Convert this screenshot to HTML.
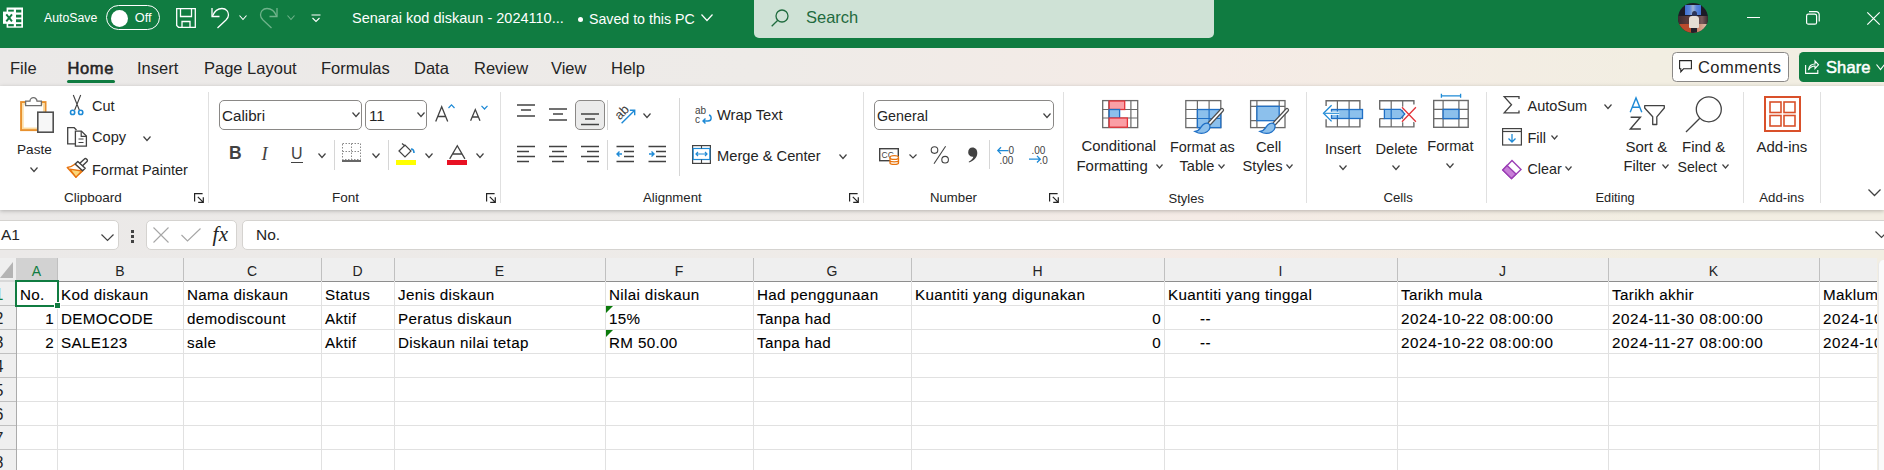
<!DOCTYPE html>
<html><head><meta charset="utf-8">
<style>
*{box-sizing:border-box;margin:0;padding:0}
html,body{width:1884px;height:470px;overflow:hidden;background:#f3f0ed;font-family:"Liberation Sans",sans-serif;color:#242424}
.a{position:absolute;white-space:pre;line-height:1}
svg{position:absolute;overflow:visible}
.c{position:absolute;font-size:15.2px;letter-spacing:0.35px;line-height:22px;color:#000;white-space:pre;-webkit-text-stroke:0.1px #000}
.d{letter-spacing:0.6px}
.hl{position:absolute;top:3.5px;font-size:14px;line-height:18px;text-align:center}
.rn{position:absolute;left:-10.5px;width:14px;font-size:16px;line-height:24px;text-align:right}
</style></head><body>

<div style="position:absolute;left:0px;top:0px;width:1884px;height:470px;background:linear-gradient(90deg,#ebe9e8 0%,#eeebe8 40%,#f5ebe6 64%,#f2eee2 88%,#f2eee3 100%)"></div>
<div style="position:absolute;left:0px;top:0px;width:1884px;height:48px;background:#107c41"></div>
<svg style="left:0px;top:0px" width="28" height="30" viewBox="0 0 28 30"><rect x="6.6" y="7.5" width="16.4" height="20.2" fill="#fff"/>
<rect x="3" y="11.6" width="11.1" height="12.2" fill="#fff"/>
<g fill="#107c41"><rect x="16" y="9.7" width="5.3" height="2.8"/><rect x="16" y="14.7" width="5.3" height="2.8"/><rect x="16" y="19.3" width="5.3" height="2.9"/><rect x="16" y="24.1" width="5.3" height="2.2"/>
<rect x="8.2" y="9.7" width="5.6" height="1.9"/><rect x="8.2" y="24.1" width="5.6" height="2.2"/></g>
<path d="M6.3 14.3L12 21.4M12 14.3L6.3 21.4" stroke="#107c41" stroke-width="1.9"/></svg>
<div class="a" style="left:44.0px;top:12.3px;font-size:12.3px;color:#fff;">AutoSave</div>
<div style="position:absolute;left:106px;top:5px;width:54px;height:25px;border:1.2px solid #fff;border-radius:13px"></div>
<div style="position:absolute;left:110.5px;top:9.5px;width:17px;height:17px;background:#fff;border-radius:50%"></div>
<div class="a" style="left:134.8px;top:12.1px;font-size:12.8px;color:#fff;">Off</div>
<svg style="left:176px;top:8px" width="20" height="20" viewBox="0 0 20 20"><path d="M0.7 0.7H19.3V19.3H2.5L0.7 17.5Z" fill="none" stroke="#fff" stroke-width="1.3"/>
<path d="M4.5 0.7V8.5H15.5V0.7" fill="none" stroke="#fff" stroke-width="1.3"/>
<path d="M6 19.3V13.5H14V19.3" fill="none" stroke="#fff" stroke-width="1.3"/></svg>
<svg style="left:211px;top:8px" width="20" height="20" viewBox="0 0 20 20"><path d="M1 0V8.5H8.5" fill="none" stroke="#fff" stroke-width="1.3"/>
<path d="M1.5 8C3.5 3 6.5 0.5 11 0.5C15.5 0.5 17.5 4 17.5 7C17.5 9 16.5 10.5 15 12L6.5 20" fill="none" stroke="#fff" stroke-width="1.3"/></svg>
<svg style="left:239px;top:15px" width="8" height="5" viewBox="0 0 8 5"><path d="M0.5 0.5L4.0 4.5L7.5 0.5" fill="none" stroke="#fff" stroke-width="1.1"/></svg>
<svg style="left:259px;top:8px" width="20" height="20" viewBox="0 0 20 20"><path d="M18 0V8.5H10.5" fill="none" stroke="#6fb38b" stroke-width="1.3"/>
<path d="M17.5 8C15.5 3 12.5 0.5 8 0.5C3.5 0.5 1.5 4 1.5 7C1.5 9 2.5 10.5 4 12L12.5 20" fill="none" stroke="#6fb38b" stroke-width="1.3"/></svg>
<svg style="left:287px;top:15px" width="8" height="5" viewBox="0 0 8 5"><path d="M0.5 0.5L4.0 4.5L7.5 0.5" fill="none" stroke="#6fb38b" stroke-width="1.1"/></svg>
<svg style="left:311px;top:14px" width="10" height="9" viewBox="0 0 10 9"><path d="M0.5 1H9.5M1.5 4L5 7.5L8.5 4" fill="none" stroke="#fff" stroke-width="1.1"/></svg>
<div class="a" style="left:352.0px;top:11.3px;font-size:14.5px;color:#fff;">Senarai kod diskaun - 2024110...</div>
<div style="position:absolute;left:578px;top:17px;width:5px;height:5px;background:#fff;border-radius:50%"></div>
<div class="a" style="left:589.0px;top:11.6px;font-size:14.2px;color:#fff;">Saved to this PC</div>
<svg style="left:701px;top:14px" width="12" height="7" viewBox="0 0 12 7"><path d="M0.5 0.5L6.0 6.5L11.5 0.5" fill="none" stroke="#fff" stroke-width="1.2"/></svg>
<div style="position:absolute;left:754px;top:-5px;width:460px;height:43px;background:#cfe2d6;border-radius:5px"></div>
<svg style="left:771px;top:9px" width="18" height="18" viewBox="0 0 18 18"><circle cx="11" cy="7" r="6" fill="none" stroke="#1f6b3e" stroke-width="1.3"/><path d="M6.8 11.2L0.7 17.3" stroke="#1f6b3e" stroke-width="1.3"/></svg>
<div class="a" style="left:806.0px;top:9.0px;font-size:16.5px;color:#1f6b3e;">Search</div>
<div style="position:absolute;left:1678px;top:3px;width:30px;height:30px;border-radius:50%;background:#1d1b27;overflow:hidden">
<div style="position:absolute;left:6.7px;top:2.4px;width:16.5px;height:9.6px;background:linear-gradient(90deg,#3f6fd0 0%,#5b86d8 30%,#9fb3d0 50%,#5b86d8 70%,#3f72d6 100%)"></div>
<div style="position:absolute;left:0;top:13px;width:30px;height:9px;background:linear-gradient(90deg,#3a2a30,#5a3a3a 30%,#4a3a40 60%,#7a5a5a 80%,#3a2a30)"></div>
<div style="position:absolute;left:0;top:21px;width:16px;height:10px;background:#b94a2c"></div>
<div style="position:absolute;left:15px;top:21px;width:15px;height:10px;background:linear-gradient(90deg,#c86a4a,#d9c6b6)"></div>
<div style="position:absolute;left:13.5px;top:8px;width:5px;height:6px;background:#2d3558;border-radius:50% 50% 30% 30%"></div>
<div style="position:absolute;left:11px;top:12.5px;width:9.5px;height:12.5px;background:#e6ded4;border-radius:3px 3px 1px 1px"></div>
<div style="position:absolute;left:13px;top:24.5px;width:5.5px;height:6px;background:#22202a"></div>
</div>
<div style="position:absolute;left:1746.5px;top:16.6px;width:13px;height:1.3px;background:#fff"></div>
<svg style="left:1806px;top:11px" width="14" height="14" viewBox="0 0 14 14"><rect x="0.6" y="3.2" width="10" height="10" rx="1.8" fill="none" stroke="#fff" stroke-width="1.2"/><path d="M3 0.6H10.2A3 3 0 0 1 13.2 3.6V10.6" fill="none" stroke="#fff" stroke-width="1.2"/></svg>
<svg style="left:1866.5px;top:11.5px" width="13" height="13" viewBox="0 0 13 13"><path d="M0.3 0.3L12.7 12.7M12.7 0.3L0.3 12.7" stroke="#fff" stroke-width="1.2"/></svg>
<div class="a" style="left:10.0px;top:59.5px;font-size:16.5px;color:#242424;">File</div>
<div class="a" style="left:137.0px;top:59.5px;font-size:16.5px;color:#242424;">Insert</div>
<div class="a" style="left:204.0px;top:59.5px;font-size:16.5px;color:#242424;">Page Layout</div>
<div class="a" style="left:321.0px;top:59.5px;font-size:16.5px;color:#242424;">Formulas</div>
<div class="a" style="left:414.0px;top:59.5px;font-size:16.5px;color:#242424;">Data</div>
<div class="a" style="left:474.0px;top:59.5px;font-size:16.5px;color:#242424;">Review</div>
<div class="a" style="left:551.0px;top:59.5px;font-size:16.5px;color:#242424;">View</div>
<div class="a" style="left:611.0px;top:59.5px;font-size:16.5px;color:#242424;">Help</div>
<div class="a" style="left:67.5px;top:59.5px;font-size:16.5px;color:#242424;-webkit-text-stroke:0.55px #242424;letter-spacing:0.6px">Home</div>
<div style="position:absolute;left:67px;top:80px;width:48px;height:3px;background:#107c41;border-radius:2px"></div>
<div style="position:absolute;left:1672px;top:52px;width:117px;height:30px;background:#fff;border:1px solid #8a8886;border-radius:4.5px"></div>
<svg style="left:1679px;top:60px" width="13" height="13" viewBox="0 0 13 13"><path d="M0.6 0.6H12.4V8.8H4.5L1.8 11.8V8.8H0.6Z" fill="none" stroke="#242424" stroke-width="1.1"/></svg>
<div class="a" style="left:1698.0px;top:59.3px;font-size:16.5px;color:#242424;letter-spacing:0.45px">Comments</div>
<div style="position:absolute;left:1799px;top:52px;width:100px;height:30px;background:#107c41;border-radius:4.5px"></div>
<svg style="left:1805px;top:59px" width="14" height="15" viewBox="0 0 14 15"><path d="M0.6 6V14.4H12.8V11" fill="none" stroke="#fff" stroke-width="1.1"/><path d="M3.5 11C4 7 6.5 5 10 5V2L13.5 5.8L10 9.5V7C7 7 5 8.5 3.5 11Z" fill="none" stroke="#fff" stroke-width="1.1"/></svg>
<div class="a" style="left:1826.0px;top:59.3px;font-size:16.5px;color:#fff;-webkit-text-stroke:0.5px #fff;letter-spacing:0.1px">Share</div>
<svg style="left:1876px;top:64px" width="9" height="6" viewBox="0 0 9 6"><path d="M0.5 0.5L4.5 5.5L8.5 0.5" fill="none" stroke="#fff" stroke-width="1.2"/></svg>
<div style="position:absolute;left:0px;top:86px;width:1884px;height:124px;background:#fff;box-shadow:0 1px 4px rgba(0,0,0,.25)"></div>
<svg style="left:19px;top:96px" width="36" height="38" viewBox="0 0 36 38"><rect x="2.1" y="6.1" width="24.4" height="28" fill="#fff" stroke="#e8912e" stroke-width="2"/>
<rect x="3.9" y="7.9" width="20.8" height="24.4" fill="#fff" stroke="#fcdca0" stroke-width="1.5"/>
<path d="M6.6 9.6V5.2H11A3.5 3.5 0 0 1 18 5.2H22.4V9.6Z" fill="#fff" stroke="#6e6e6e" stroke-width="1.3"/>
<rect x="18.8" y="16.2" width="15.4" height="20" fill="#f7f7f7" stroke="#505050" stroke-width="1.6"/></svg>
<div class="a" style="left:17.0px;top:142.5px;font-size:13.6px;color:#242424;">Paste</div>
<svg style="left:30px;top:167px" width="8" height="5" viewBox="0 0 8 5"><path d="M0.5 0.5L4.0 4.5L7.5 0.5" fill="none" stroke="#424242" stroke-width="1.2"/></svg>
<svg style="left:70px;top:95px" width="14" height="21" viewBox="0 0 14 21"><path d="M3.3 0L9.4 15.3M10.7 0L4.6 15.3" stroke="#424242" stroke-width="1.1"/>
<circle cx="2.6" cy="17.4" r="2.1" fill="#fff" stroke="#1e8ad6" stroke-width="1.6"/><circle cx="10.7" cy="17.4" r="2.1" fill="#fff" stroke="#1e8ad6" stroke-width="1.6"/></svg>
<div class="a" style="left:92.0px;top:98.7px;font-size:14.5px;color:#242424;">Cut</div>
<svg style="left:67px;top:127px" width="21" height="20" viewBox="0 0 21 20"><path d="M8.3 16.9H0.7V0.7H7.2L9.5 3" fill="none" stroke="#424242" stroke-width="1.3"/>
<path d="M8.4 4.1H14.4L19.4 9.1V19.2H8.4Z" fill="#fff" stroke="#424242" stroke-width="1.3"/>
<path d="M14.2 4.1V9.3H19.4" fill="none" stroke="#424242" stroke-width="1.2"/><path d="M11.5 12H16.5M11.5 15.5H16.5" stroke="#424242" stroke-width="1.1"/></svg>
<div class="a" style="left:92.0px;top:130.1px;font-size:14.6px;color:#242424;">Copy</div>
<svg style="left:143px;top:136px" width="8" height="5" viewBox="0 0 8 5"><path d="M0.5 0.5L4.0 4.5L7.5 0.5" fill="none" stroke="#424242" stroke-width="1.2"/></svg>
<svg style="left:66px;top:158px" width="22" height="21" viewBox="0 0 22 21"><path d="M1.3 9.5C4.5 9 7 7.8 9.2 6L16.6 12.8C14.5 15 12 17 9.9 19.1Z" fill="#fff" stroke="#e8740e" stroke-width="1.5" stroke-linejoin="round"/>
<path d="M3.8 11.1L15.9 13L9.9 19.1Z" fill="#fbd77a" stroke="#e8740e" stroke-width="1.3" stroke-linejoin="round"/>
<path d="M13.3 5.8L18.4 0.9A1.4 1.4 0 0 1 20.4 0.9L21 1.5A1.4 1.4 0 0 1 21 3.5L16 8.2Z" fill="#fff" stroke="#424242" stroke-width="1.4"/>
<path d="M9.2 6L11.8 3.4L19.2 10.2L16.6 12.8Z" fill="#fff" stroke="#424242" stroke-width="1.4" stroke-linejoin="round"/></svg>
<div class="a" style="left:92.0px;top:162.7px;font-size:14.5px;color:#242424;">Format Painter</div>
<div class="a" style="left:64.0px;top:190.6px;font-size:13.5px;color:#242424;">Clipboard</div>
<svg style="left:194px;top:193px" width="10" height="10" viewBox="0 0 10 10"><path d="M0.6 8.5V0.6H8.6M3.8 3.8L9.3 9.3M9.3 4.2V9.3H4.2" fill="none" stroke="#242424" stroke-width="1.2"/></svg>
<div style="position:absolute;left:208px;top:92px;width:1px;height:111px;background:#e0e0e0"></div>
<div style="position:absolute;left:219px;top:100px;width:143px;height:30px;border:1px solid #8a8886;border-radius:5px;background:#fff"></div>
<div class="a" style="left:222.0px;top:108.1px;font-size:15.2px;color:#242424;">Calibri</div>
<svg style="left:352px;top:112px" width="8" height="5" viewBox="0 0 8 5"><path d="M0.5 0.5L4.0 4.5L7.5 0.5" fill="none" stroke="#424242" stroke-width="1.2"/></svg>
<div style="position:absolute;left:365px;top:100px;width:62px;height:30px;border:1px solid #8a8886;border-radius:5px;background:#fff"></div>
<div class="a" style="left:369.0px;top:108.1px;font-size:15.2px;color:#242424;">11</div>
<svg style="left:417px;top:112px" width="8" height="5" viewBox="0 0 8 5"><path d="M0.5 0.5L4.0 4.5L7.5 0.5" fill="none" stroke="#424242" stroke-width="1.2"/></svg>
<svg style="left:435px;top:105.5px" width="14" height="16" viewBox="0 0 14 16"><path d="M0.7 15.5L6.7 0.7L12.7 15.5M2.7 10.5H10.7" fill="none" stroke="#424242" stroke-width="1.3"/></svg>
<svg style="left:448px;top:104px" width="7" height="5" viewBox="0 0 7 5"><path d="M0.5 4L3.5 0.8L6.5 4" fill="none" stroke="#1e8ad6" stroke-width="1.2"/></svg>
<svg style="left:469.5px;top:109.3px" width="11" height="12" viewBox="0 0 11 12"><path d="M0.6 11.7L5.3 0.6L10 11.7M2.2 8H8.4" fill="none" stroke="#424242" stroke-width="1.3"/></svg>
<svg style="left:481px;top:105px" width="7" height="5" viewBox="0 0 7 5"><path d="M0.5 0.8L3.5 4L6.5 0.8" fill="none" stroke="#1e8ad6" stroke-width="1.2"/></svg>
<div class="a" style="left:229.0px;top:145.4px;font-size:17.5px;color:#424242;font-weight:bold">B</div>
<div class="a" style="left:261.5px;top:144.5px;font-size:18.5px;color:#424242;font-style:italic;font-family:Liberation Serif">I</div>
<div class="a" style="left:291.0px;top:146.0px;font-size:16px;color:#424242;">U</div>
<div style="position:absolute;left:291px;top:162px;width:12px;height:1.3px;background:#424242"></div>
<svg style="left:318px;top:153px" width="8" height="5" viewBox="0 0 8 5"><path d="M0.5 0.5L4.0 4.5L7.5 0.5" fill="none" stroke="#424242" stroke-width="1.2"/></svg>
<div style="position:absolute;left:334px;top:140px;width:1px;height:30px;background:#d6d6d6"></div>
<svg style="left:342px;top:143px" width="19" height="19" viewBox="0 0 19 19"><rect x="0.5" y="0.5" width="18" height="16" fill="none" stroke="#8a8a8a" stroke-width="1" stroke-dasharray="1.5 1.5"/>
<path d="M9.5 0.5V16.5M0.5 8.5H18.5" stroke="#8a8a8a" stroke-width="1" stroke-dasharray="1.5 1.5"/>
<path d="M0 18H19" stroke="#424242" stroke-width="1.6"/></svg>
<svg style="left:372px;top:153px" width="8" height="5" viewBox="0 0 8 5"><path d="M0.5 0.5L4.0 4.5L7.5 0.5" fill="none" stroke="#424242" stroke-width="1.2"/></svg>
<div style="position:absolute;left:388px;top:140px;width:1px;height:30px;background:#d6d6d6"></div>
<svg style="left:396px;top:143px" width="20" height="22" viewBox="0 0 20 22"><path d="M3 8L9 2L15 8L9 14Z" fill="#fff" stroke="#424242" stroke-width="1.2"/>
<path d="M6 0.5L9 3" stroke="#424242" stroke-width="1.2"/><path d="M15 6C17 6 18 8 18 10" fill="none" stroke="#1e8ad6" stroke-width="1.6"/>
<rect x="0" y="17" width="20" height="5" fill="#ffff00"/></svg>
<svg style="left:425px;top:153px" width="8" height="5" viewBox="0 0 8 5"><path d="M0.5 0.5L4.0 4.5L7.5 0.5" fill="none" stroke="#424242" stroke-width="1.2"/></svg>
<svg style="left:449px;top:145px" width="17" height="14" viewBox="0 0 17 14"><path d="M0.7 13.8L8.3 0.7L15.9 13.8M3.5 9H13.1" fill="none" stroke="#424242" stroke-width="1.3"/></svg>
<div style="position:absolute;left:447px;top:159.5px;width:20px;height:5px;background:#e81123"></div>
<svg style="left:476px;top:153px" width="8" height="5" viewBox="0 0 8 5"><path d="M0.5 0.5L4.0 4.5L7.5 0.5" fill="none" stroke="#424242" stroke-width="1.2"/></svg>
<div class="a" style="left:332.0px;top:190.6px;font-size:13.5px;color:#242424;">Font</div>
<svg style="left:486px;top:193px" width="10" height="10" viewBox="0 0 10 10"><path d="M0.6 8.5V0.6H8.6M3.8 3.8L9.3 9.3M9.3 4.2V9.3H4.2" fill="none" stroke="#242424" stroke-width="1.2"/></svg>
<div style="position:absolute;left:500px;top:92px;width:1px;height:111px;background:#e0e0e0"></div>
<svg style="left:517px;top:95px" width="30" height="80" viewBox="0 0 30 80"><path d="M0 10H18" stroke="#424242" stroke-width="1.5"/><path d="M4 15H14" stroke="#424242" stroke-width="1.5"/><path d="M0 21H18" stroke="#424242" stroke-width="1.5"/></svg>
<svg style="left:549px;top:95px" width="30" height="80" viewBox="0 0 30 80"><path d="M0 14H18" stroke="#424242" stroke-width="1.5"/><path d="M4 19H14" stroke="#424242" stroke-width="1.5"/><path d="M0 25H18" stroke="#424242" stroke-width="1.5"/></svg>
<div style="position:absolute;left:575px;top:100px;width:30px;height:30px;background:#ebebeb;border:1px solid #8a8886;border-radius:5px"></div>
<svg style="left:581px;top:95px" width="30" height="80" viewBox="0 0 30 80"><path d="M0 19H18" stroke="#424242" stroke-width="1.5"/><path d="M4 24H14" stroke="#424242" stroke-width="1.5"/><path d="M0 29.5H18" stroke="#424242" stroke-width="1.5"/></svg>
<div style="position:absolute;left:607px;top:100px;width:1px;height:30px;background:#d6d6d6"></div>
<svg style="left:614px;top:104px" width="22" height="20" viewBox="0 0 22 20"><text x="8" y="12.5" text-anchor="middle" transform="rotate(-45 8 8.5)" font-size="13" fill="#424242" font-family="Liberation Sans">ab</text>
<path d="M7.6 19.3L20.5 6.5M15.8 6.3H20.7V11.2" fill="none" stroke="#1e8ad6" stroke-width="1.4"/></svg>
<svg style="left:643px;top:113px" width="8" height="5" viewBox="0 0 8 5"><path d="M0.5 0.5L4.0 4.5L7.5 0.5" fill="none" stroke="#424242" stroke-width="1.2"/></svg>
<svg style="left:517px;top:95px" width="30" height="80" viewBox="0 0 30 80"><path d="M0 51.5H18" stroke="#424242" stroke-width="1.5"/><path d="M0 56.5H12" stroke="#424242" stroke-width="1.5"/><path d="M0 61.5H18" stroke="#424242" stroke-width="1.5"/><path d="M0 66.5H12" stroke="#424242" stroke-width="1.5"/></svg>
<svg style="left:549px;top:95px" width="30" height="80" viewBox="0 0 30 80"><path d="M0 51.5H18" stroke="#424242" stroke-width="1.5"/><path d="M3 56.5H15" stroke="#424242" stroke-width="1.5"/><path d="M0 61.5H18" stroke="#424242" stroke-width="1.5"/><path d="M3 66.5H15" stroke="#424242" stroke-width="1.5"/></svg>
<svg style="left:581px;top:95px" width="30" height="80" viewBox="0 0 30 80"><path d="M0 51.5H18" stroke="#424242" stroke-width="1.5"/><path d="M6 56.5H18" stroke="#424242" stroke-width="1.5"/><path d="M0 61.5H18" stroke="#424242" stroke-width="1.5"/><path d="M6 66.5H18" stroke="#424242" stroke-width="1.5"/></svg>
<div style="position:absolute;left:607px;top:140px;width:1px;height:30px;background:#d6d6d6"></div>
<svg style="left:616px;top:145px" width="18" height="18" viewBox="0 0 18 18"><path d="M0.5 1.5H18M8 6.5H18M8 11.5H18M0.5 16.5H18" stroke="#424242" stroke-width="1.4"/>
<path d="M6 9H1M3.5 6.5L1 9L3.5 11.5" fill="none" stroke="#1e8ad6" stroke-width="1.4"/></svg>
<svg style="left:648px;top:145px" width="18" height="18" viewBox="0 0 18 18"><path d="M0.5 1.5H18M8 6.5H18M8 11.5H18M0.5 16.5H18" stroke="#424242" stroke-width="1.4"/>
<path d="M1 9H6M3.5 6.5L6 9L3.5 11.5" fill="none" stroke="#1e8ad6" stroke-width="1.4"/></svg>
<div style="position:absolute;left:679px;top:98px;width:1px;height:78px;background:#d6d6d6"></div>
<svg style="left:695px;top:106px" width="18" height="19" viewBox="0 0 18 19"><text x="0" y="8" font-size="10" fill="#424242" font-family="Liberation Sans">ab</text>
<text x="0" y="17" font-size="10" fill="#424242" font-family="Liberation Sans">c</text>
<path d="M14 9C17 10 17 15 13 15H8M10.5 12.5L8 15L10.5 17.5" fill="none" stroke="#1e8ad6" stroke-width="1.4"/></svg>
<div class="a" style="left:717.0px;top:108.2px;font-size:14.7px;color:#242424;">Wrap Text</div>
<svg style="left:692px;top:145px" width="19" height="19" viewBox="0 0 19 19"><rect x="0.6" y="0.6" width="17.8" height="17.8" fill="none" stroke="#424242" stroke-width="1.2"/>
<rect x="1.2" y="3.5" width="16.6" height="11" fill="#fff" stroke="#1e8ad6" stroke-width="1.2"/>
<path d="M9.5 0.6V3.5M9.5 14.5V18.4" stroke="#424242" stroke-width="1.1"/>
<path d="M4 9H15M6 7L4 9L6 11M13 7L15 9L13 11" fill="none" stroke="#1e8ad6" stroke-width="1.2"/></svg>
<div class="a" style="left:717.0px;top:148.6px;font-size:14.7px;color:#242424;">Merge &amp; Center</div>
<svg style="left:839px;top:154px" width="8" height="5" viewBox="0 0 8 5"><path d="M0.5 0.5L4.0 4.5L7.5 0.5" fill="none" stroke="#424242" stroke-width="1.2"/></svg>
<div class="a" style="left:643.0px;top:190.8px;font-size:13.2px;color:#242424;">Alignment</div>
<svg style="left:849px;top:193px" width="10" height="10" viewBox="0 0 10 10"><path d="M0.6 8.5V0.6H8.6M3.8 3.8L9.3 9.3M9.3 4.2V9.3H4.2" fill="none" stroke="#242424" stroke-width="1.2"/></svg>
<div style="position:absolute;left:863px;top:92px;width:1px;height:111px;background:#e0e0e0"></div>
<div style="position:absolute;left:874px;top:100px;width:180px;height:30px;border:1px solid #8a8886;border-radius:5px;background:#fff"></div>
<div class="a" style="left:877.0px;top:108.5px;font-size:14.3px;color:#242424;">General</div>
<svg style="left:1043px;top:113px" width="8" height="5" viewBox="0 0 8 5"><path d="M0.5 0.5L4.0 4.5L7.5 0.5" fill="none" stroke="#424242" stroke-width="1.2"/></svg>
<svg style="left:879px;top:148px" width="21" height="17" viewBox="0 0 21 17"><rect x="0.7" y="0.7" width="18.6" height="12" fill="#fff" stroke="#424242" stroke-width="1.4"/>
<text x="2.5" y="10" font-size="8.5" fill="#424242" font-family="Liberation Sans">CC</text>
<path d="M11 10V15C11 16.8 19.5 16.8 19.5 15V10M11 12.5C11 14.2 19.5 14.2 19.5 12.5" fill="#fff" stroke="#e8740e" stroke-width="1.3"/>
<ellipse cx="15.25" cy="9.5" rx="4.25" ry="1.9" fill="#fff" stroke="#e8740e" stroke-width="1.3"/></svg>
<svg style="left:909px;top:154px" width="8" height="4.5" viewBox="0 0 8 4.5"><path d="M0.5 0.5L4.0 4.0L7.5 0.5" fill="none" stroke="#424242" stroke-width="1.2"/></svg>
<svg style="left:930px;top:146px" width="20" height="18" viewBox="0 0 20 18"><circle cx="4.5" cy="4.1" r="3.3" fill="none" stroke="#424242" stroke-width="1.1"/><circle cx="15.1" cy="13.7" r="3.3" fill="none" stroke="#424242" stroke-width="1.1"/><path d="M15.6 0.3L4 17.7" stroke="#424242" stroke-width="1.1"/></svg>
<svg style="left:967px;top:147px" width="11" height="17" viewBox="0 0 11 17"><path d="M5.4 0.6C8.5 0.6 10.3 3 10.3 6C10.3 10 7.5 13.5 2 15.6L1.7 14.8C4.5 13 6 11.5 6.3 9.8C3.5 9.8 1.2 8 1.2 5.2C1.2 2.5 3 0.6 5.4 0.6Z" fill="#424242"/></svg>
<div style="position:absolute;left:989px;top:140px;width:1px;height:29px;background:#d6d6d6"></div>
<svg style="left:997px;top:145px" width="21" height="19" viewBox="0 0 21 19"><text x="11.5" y="8.5" font-size="10" fill="#424242" font-family="Liberation Sans">0</text>
<text x="2.5" y="18.5" font-size="10" fill="#424242" font-family="Liberation Sans">.00</text>
<path d="M11.5 5.6H0.8M4 2.3L0.8 5.6L4 8.9" fill="none" stroke="#1e8ad6" stroke-width="1.3"/></svg>
<svg style="left:1028px;top:145px" width="21" height="19" viewBox="0 0 21 19"><text x="3.5" y="8.5" font-size="10" fill="#424242" font-family="Liberation Sans">.00</text>
<text x="11.5" y="18.5" font-size="10" fill="#424242" font-family="Liberation Sans">.0</text>
<path d="M1 14.2H12.3M9 10.9L12.3 14.2L9 17.5" fill="none" stroke="#1e8ad6" stroke-width="1.3"/></svg>
<div class="a" style="left:930.0px;top:190.8px;font-size:13.2px;color:#242424;">Number</div>
<svg style="left:1049px;top:193px" width="10" height="10" viewBox="0 0 10 10"><path d="M0.6 8.5V0.6H8.6M3.8 3.8L9.3 9.3M9.3 4.2V9.3H4.2" fill="none" stroke="#242424" stroke-width="1.2"/></svg>
<div style="position:absolute;left:1063px;top:92px;width:1px;height:111px;background:#e0e0e0"></div>
<svg style="left:1102px;top:100px" width="36" height="28" viewBox="0 0 36 28"><rect x="0.7" y="0.6" width="35" height="27" fill="#fff" stroke="#6a6a6a" stroke-width="1.3"/>
<path d="M28.9 0.6V27.6M0.7 9.5H35.7M0.7 18H35.7M6.8 0.6V27.6" stroke="#6a6a6a" stroke-width="1.2"/>
<rect x="7.2" y="1" width="15.5" height="8.5" fill="#fa9fa6" stroke="#e3343a" stroke-width="1.3"/>
<rect x="7.2" y="9.5" width="10.4" height="8.5" fill="#8cc0ec" stroke="#1f6fc5" stroke-width="1.3"/>
<rect x="7.2" y="18" width="18.2" height="9.2" fill="#fa9fa6" stroke="#e3343a" stroke-width="1.3"/></svg>
<div class="a" style="left:1081.5px;top:139.4px;font-size:14.9px;color:#242424;">Conditional</div>
<div class="a" style="left:1076.5px;top:159.1px;font-size:14.9px;color:#242424;">Formatting</div>
<svg style="left:1156px;top:164px" width="7" height="4.5" viewBox="0 0 7 4.5"><path d="M0.5 0.5L3.5 4.0L6.5 0.5" fill="none" stroke="#424242" stroke-width="1.2"/></svg>
<svg style="left:1185px;top:100px" width="40" height="34" viewBox="0 0 40 34"><rect x="0.8" y="0.6" width="35" height="27" fill="#fff" stroke="#6a6a6a" stroke-width="1.3"/>
<path d="M0.8 9.5H35.8M0.8 18.5H35.8M12.4 0.6V27.6M24.1 0.6V27.6" stroke="#6a6a6a" stroke-width="1.2"/>
<rect x="12.4" y="9.5" width="23.4" height="18.1" fill="#8cc0ec" stroke="#1f6fc5" stroke-width="1.3"/>
<path d="M12.4 18.5H35.8M24.1 9.5V27.6" stroke="#1f6fc5" stroke-width="1.2"/>
<path d="M37 10L24.5 23.5" stroke="#505050" stroke-width="4.2" stroke-linecap="round"/><path d="M37 10L24.5 23.5" stroke="#fff" stroke-width="1.8" stroke-linecap="round"/>
<path d="M23.8 23.6C25.8 25.6 25.5 29.5 22 31.8C18.5 34 13.5 33.5 10 31.5C13 31 14.8 29 16.2 26.8C17.8 24.2 21.3 22 23.8 23.6Z" fill="#8cc0ec" stroke="#1f6fc5" stroke-width="1.3"/></svg>
<div class="a" style="left:1170.0px;top:139.8px;font-size:14.4px;color:#242424;">Format as</div>
<div class="a" style="left:1179.5px;top:159.3px;font-size:14.6px;color:#242424;">Table</div>
<svg style="left:1218px;top:164px" width="7" height="4.5" viewBox="0 0 7 4.5"><path d="M0.5 0.5L3.5 4.0L6.5 0.5" fill="none" stroke="#424242" stroke-width="1.2"/></svg>
<svg style="left:1250px;top:100px" width="40" height="34" viewBox="0 0 40 34"><rect x="0.6" y="0.6" width="34.4" height="27" fill="#fff" stroke="#6a6a6a" stroke-width="1.3"/>
<path d="M0.6 6.3H35M6.9 0.6V27.6M0.6 20.7H6.9M29.2 0.6V6.3" stroke="#6a6a6a" stroke-width="1.2"/>
<rect x="6.9" y="6.3" width="22.3" height="14.4" fill="#8cc0ec" stroke="#1f6fc5" stroke-width="1.3"/>
<path d="M37 10L24.5 23.5" stroke="#505050" stroke-width="4.2" stroke-linecap="round"/><path d="M37 10L24.5 23.5" stroke="#fff" stroke-width="1.8" stroke-linecap="round"/>
<path d="M23.8 23.6C25.8 25.6 25.5 29.5 22 31.8C18.5 34 13.5 33.5 10 31.5C13 31 14.8 29 16.2 26.8C17.8 24.2 21.3 22 23.8 23.6Z" fill="#8cc0ec" stroke="#1f6fc5" stroke-width="1.3"/></svg>
<div class="a" style="left:1256.0px;top:139.6px;font-size:14.7px;color:#242424;">Cell</div>
<div class="a" style="left:1242.5px;top:159.3px;font-size:14.7px;color:#242424;">Styles</div>
<svg style="left:1286px;top:164px" width="7" height="4.5" viewBox="0 0 7 4.5"><path d="M0.5 0.5L3.5 4.0L6.5 0.5" fill="none" stroke="#424242" stroke-width="1.2"/></svg>
<div class="a" style="left:1168.5px;top:191.6px;font-size:13px;color:#242424;">Styles</div>
<div style="position:absolute;left:1306px;top:92px;width:1px;height:111px;background:#e0e0e0"></div>
<svg style="left:1322px;top:100px" width="42" height="28" viewBox="0 0 42 28"><path d="M4.1 6V0.7H37.9V26.9H4.1V19.2" fill="#fff" stroke="#6a6a6a" stroke-width="1.4"/>
<path d="M15.4 0.7V26.9M27.1 0.7V26.9" stroke="#6a6a6a" stroke-width="1.2"/>
<rect x="9.5" y="9.5" width="31" height="9" fill="#8cc0ec" stroke="#1f6fc5" stroke-width="1.3"/>
<path d="M27.1 9.5V18.5M15.4 9.5V18.5" stroke="#1f6fc5" stroke-width="1.2"/>
<path d="M17.3 13.3H2.5" stroke="#fff" stroke-width="3.2"/>
<path d="M17.3 13.3H2.5" stroke="#1e8ad6" stroke-width="1.1"/>
<path d="M9.6 5.2L1.5 13.3L9.6 21.4" fill="none" stroke="#1e8ad6" stroke-width="1.3"/></svg>
<div class="a" style="left:1325.0px;top:142.0px;font-size:14.4px;color:#242424;">Insert</div>
<svg style="left:1339px;top:165px" width="8" height="5" viewBox="0 0 8 5"><path d="M0.5 0.5L4.0 4.5L7.5 0.5" fill="none" stroke="#424242" stroke-width="1.2"/></svg>
<svg style="left:1379px;top:100px" width="38" height="28" viewBox="0 0 38 28"><path d="M0.7 9.4V0.7H34.9V4.5M34.9 22V26.9H0.7V18.6" fill="#fff" stroke="#6a6a6a" stroke-width="1.4"/>
<path d="M12.2 0.7V26.9M23.7 0.7V26.9" stroke="#6a6a6a" stroke-width="1.2"/>
<path d="M0.7 9.4H5.4M0.7 18.6H5.4" stroke="#6a6a6a" stroke-width="1.2"/>
<path d="M5.4 9.4H21.5L25.8 14L21.5 18.6H5.4Z" fill="#8cc0ec" stroke="#1f6fc5" stroke-width="1.3"/><path d="M12.2 9.4V18.6" stroke="#1f6fc5" stroke-width="1.2"/>
<path d="M23 7.3L36.9 21.8M36.9 7.3L23 21.8" stroke="#fff" stroke-width="3"/><path d="M23 7.3L36.9 21.8M36.9 7.3L23 21.8" stroke="#e3343a" stroke-width="1.3"/></svg>
<div class="a" style="left:1375.5px;top:141.8px;font-size:14.6px;color:#242424;">Delete</div>
<svg style="left:1392px;top:165px" width="8" height="5" viewBox="0 0 8 5"><path d="M0.5 0.5L4.0 4.5L7.5 0.5" fill="none" stroke="#424242" stroke-width="1.2"/></svg>
<svg style="left:1433px;top:93px" width="36" height="35" viewBox="0 0 36 35"><path d="M8.4 2.8H27.6M8.4 0.8V4.8M27.6 0.8V4.8" stroke="#1e8ad6" stroke-width="1.3"/>
<rect x="0.7" y="7.5" width="34.5" height="26.8" fill="#fff" stroke="#6a6a6a" stroke-width="1.4"/>
<path d="M10.1 7.5V34.3M25.9 7.5V34.3M0.7 16.4H35.2M0.7 25.6H35.2" stroke="#6a6a6a" stroke-width="1.2"/>
<rect x="10.1" y="16.4" width="15.8" height="9.2" fill="#8cc0ec" stroke="#1f6fc5" stroke-width="1.3"/></svg>
<div class="a" style="left:1427.3px;top:139.2px;font-size:14.6px;color:#242424;">Format</div>
<svg style="left:1446px;top:163px" width="8" height="5" viewBox="0 0 8 5"><path d="M0.5 0.5L4.0 4.5L7.5 0.5" fill="none" stroke="#424242" stroke-width="1.2"/></svg>
<div class="a" style="left:1383.5px;top:191.4px;font-size:13.2px;color:#242424;">Cells</div>
<div style="position:absolute;left:1486px;top:92px;width:1px;height:111px;background:#e0e0e0"></div>
<svg style="left:1503px;top:96px" width="17" height="18" viewBox="0 0 17 18"><path d="M16 3V0.7H1.2L8.5 8.8L1.2 16.9H16V14.5" fill="none" stroke="#424242" stroke-width="1.3"/></svg>
<div class="a" style="left:1527.5px;top:99.1px;font-size:14.5px;color:#242424;">AutoSum</div>
<svg style="left:1604px;top:104px" width="8" height="5" viewBox="0 0 8 5"><path d="M0.5 0.5L4.0 4.5L7.5 0.5" fill="none" stroke="#424242" stroke-width="1.2"/></svg>
<svg style="left:1502px;top:128px" width="20" height="18" viewBox="0 0 20 18"><rect x="0.6" y="0.6" width="18.8" height="16.4" fill="#fff" stroke="#424242" stroke-width="1.2"/><path d="M0.6 3.5H19.4" stroke="#424242" stroke-width="1.2"/>
<path d="M10 6V14M6.5 10.5L10 14L13.5 10.5" fill="none" stroke="#1e8ad6" stroke-width="1.3"/></svg>
<div class="a" style="left:1527.5px;top:130.7px;font-size:14.5px;color:#242424;">Fill</div>
<svg style="left:1551px;top:135px" width="7" height="4.5" viewBox="0 0 7 4.5"><path d="M0.5 0.5L3.5 4.0L6.5 0.5" fill="none" stroke="#424242" stroke-width="1.2"/></svg>
<svg style="left:1502px;top:159px" width="20" height="20" viewBox="0 0 20 20"><path d="M0.8 11L10 1.5L19 10.5L9.5 19.5Z" fill="#fff" stroke="#9b3fb5" stroke-width="1.4"/>
<path d="M0.8 11L5 6.5L14 15L9.5 19.5Z" fill="#c87fd8" stroke="#9b3fb5" stroke-width="1.4"/></svg>
<div class="a" style="left:1527.5px;top:162.3px;font-size:14.3px;color:#242424;">Clear</div>
<svg style="left:1565px;top:166px" width="7" height="4.5" viewBox="0 0 7 4.5"><path d="M0.5 0.5L3.5 4.0L6.5 0.5" fill="none" stroke="#424242" stroke-width="1.2"/></svg>
<svg style="left:1628px;top:97px" width="38" height="34" viewBox="0 0 38 34"><path d="M2.2 15.2L8 0.9L13.8 15.2M4.3 10.3H11.7" fill="none" stroke="#1e8ad6" stroke-width="1.4"/>
<path d="M2.6 20.2H12.4L2.3 32H12.9" fill="none" stroke="#424242" stroke-width="1.4"/>
<path d="M16.7 8.7H36.3V11L28.8 19.8V27.5H24.7V19.8L16.7 11Z" fill="#fff" stroke="#424242" stroke-width="1.3" stroke-linejoin="round"/></svg>
<div class="a" style="left:1625.5px;top:138.9px;font-size:15px;color:#242424;">Sort &amp;</div>
<div class="a" style="left:1623.5px;top:159.2px;font-size:14.6px;color:#242424;">Filter</div>
<svg style="left:1662px;top:164px" width="7" height="4.5" viewBox="0 0 7 4.5"><path d="M0.5 0.5L3.5 4.0L6.5 0.5" fill="none" stroke="#424242" stroke-width="1.2"/></svg>
<svg style="left:1685px;top:95px" width="38" height="38" viewBox="0 0 38 38"><circle cx="23.8" cy="14.3" r="12.5" fill="#fff" stroke="#424242" stroke-width="1.3"/><path d="M14.8 23.3L1 37" stroke="#424242" stroke-width="1.3"/></svg>
<div class="a" style="left:1682.0px;top:138.9px;font-size:15px;color:#242424;">Find &amp;</div>
<div class="a" style="left:1677.5px;top:159.6px;font-size:14.2px;color:#242424;">Select</div>
<svg style="left:1722px;top:164px" width="7" height="4.5" viewBox="0 0 7 4.5"><path d="M0.5 0.5L3.5 4.0L6.5 0.5" fill="none" stroke="#424242" stroke-width="1.2"/></svg>
<div class="a" style="left:1595.5px;top:191.8px;font-size:12.8px;color:#242424;">Editing</div>
<div style="position:absolute;left:1743px;top:92px;width:1px;height:111px;background:#e0e0e0"></div>
<svg style="left:1764px;top:96px" width="37" height="36" viewBox="0 0 37 36"><rect x="1" y="1" width="35" height="34" fill="#fff" stroke="#d9502a" stroke-width="2"/>
<rect x="6" y="6" width="11" height="10.5" fill="none" stroke="#d9502a" stroke-width="1.6"/><rect x="20" y="6" width="11" height="10.5" fill="none" stroke="#d9502a" stroke-width="1.6"/>
<rect x="6" y="19.5" width="11" height="10.5" fill="none" stroke="#d9502a" stroke-width="1.6"/><rect x="20" y="19.5" width="11" height="10.5" fill="none" stroke="#d9502a" stroke-width="1.6"/></svg>
<div class="a" style="left:1756.5px;top:138.7px;font-size:15px;color:#242424;">Add-ins</div>
<div class="a" style="left:1759.3px;top:191.4px;font-size:13.2px;color:#242424;">Add-ins</div>
<div style="position:absolute;left:1820px;top:92px;width:1px;height:111px;background:#e0e0e0"></div>
<svg style="left:1868px;top:189px" width="13" height="7" viewBox="0 0 13 7"><path d="M0.5 0.5L6.5 6.5L12.5 0.5" fill="none" stroke="#424242" stroke-width="1.3"/></svg>
<div style="position:absolute;left:-6px;top:220px;width:125px;height:30px;background:#fff;border-radius:5px;border:1px solid #d5d3d0"></div>
<div class="a" style="left:1.0px;top:227.4px;font-size:15.5px;color:#242424;">A1</div>
<svg style="left:101px;top:234px" width="13" height="7" viewBox="0 0 13 7"><path d="M0.5 0.5L6.5 6.5L12.5 0.5" fill="none" stroke="#424242" stroke-width="1.2"/></svg>
<div style="position:absolute;left:131.3px;top:229.5px;width:3px;height:3px;background:#424242"></div>
<div style="position:absolute;left:131.3px;top:234.5px;width:3px;height:3px;background:#424242"></div>
<div style="position:absolute;left:131.3px;top:239.5px;width:3px;height:3px;background:#424242"></div>
<div style="position:absolute;left:145.5px;top:220px;width:91px;height:30px;background:#fff;border-radius:5px;border:1px solid #d5d3d0"></div>
<svg style="left:153px;top:227px" width="16" height="16" viewBox="0 0 16 16"><path d="M0.5 0.5L15.5 15.5M15.5 0.5L0.5 15.5" stroke="#a6a6a6" stroke-width="1.1"/></svg>
<svg style="left:181px;top:228px" width="20" height="14" viewBox="0 0 20 14"><path d="M0.5 7L6.5 13L19.5 0.5" fill="none" stroke="#a6a6a6" stroke-width="1.1"/></svg>
<div class="a" style="left:212.5px;top:224.2px;font-size:21px;color:#242424;font-family:'Liberation Serif';font-style:italic;letter-spacing:0.5px">fx</div>
<div style="position:absolute;left:242px;top:220px;width:1660px;height:30px;background:#fff;border-radius:5px;border:1px solid #d5d3d0"></div>
<div class="a" style="left:256.0px;top:227.4px;font-size:15.5px;color:#242424;">No.</div>
<svg style="left:1875px;top:231px" width="13" height="7" viewBox="0 0 13 7"><path d="M0.5 0.5L6.5 6.5L12.5 0.5" fill="none" stroke="#424242" stroke-width="1.2"/></svg>
<div style="position:absolute;left:0;top:258px;width:1877px;height:212px;background:#fff;overflow:hidden">
<div style="position:absolute;left:0;top:0;width:1877px;height:23px;background:#efefef"></div>
<div style="position:absolute;left:0;top:0;width:16px;height:212px;background:#efefef"></div>
<div style="position:absolute;left:16px;top:0;width:41px;height:23px;background:#d2d2d2"></div>
<svg style="left:0;top:4px" width="13" height="16" viewBox="0 0 13 16"><path d="M13 0V16H0Z" fill="#b4b4b4"/></svg>
<div style="position:absolute;left:16px;top:23px;width:1861px;height:1px;background:#8e8e8e"></div>
<div style="position:absolute;left:0;top:22px;width:16px;height:1.5px;background:#d8d8d8"></div>
<div style="position:absolute;left:16px;top:47px;width:1861px;height:1px;background:#e1e1e1"></div>
<div style="position:absolute;left:0;top:47px;width:16px;height:1px;background:#c0c0c0"></div>
<div style="position:absolute;left:16px;top:71px;width:1861px;height:1px;background:#e1e1e1"></div>
<div style="position:absolute;left:0;top:71px;width:16px;height:1px;background:#c0c0c0"></div>
<div style="position:absolute;left:16px;top:95px;width:1861px;height:1px;background:#e1e1e1"></div>
<div style="position:absolute;left:0;top:95px;width:16px;height:1px;background:#c0c0c0"></div>
<div style="position:absolute;left:16px;top:119px;width:1861px;height:1px;background:#e1e1e1"></div>
<div style="position:absolute;left:0;top:119px;width:16px;height:1px;background:#c0c0c0"></div>
<div style="position:absolute;left:16px;top:143px;width:1861px;height:1px;background:#e1e1e1"></div>
<div style="position:absolute;left:0;top:143px;width:16px;height:1px;background:#c0c0c0"></div>
<div style="position:absolute;left:16px;top:167px;width:1861px;height:1px;background:#e1e1e1"></div>
<div style="position:absolute;left:0;top:167px;width:16px;height:1px;background:#c0c0c0"></div>
<div style="position:absolute;left:16px;top:191px;width:1861px;height:1px;background:#e1e1e1"></div>
<div style="position:absolute;left:0;top:191px;width:16px;height:1px;background:#c0c0c0"></div>
<div style="position:absolute;left:15.5px;top:23px;width:1px;height:212px;background:#ababab"></div>
<div style="position:absolute;left:57px;top:23px;width:1px;height:190px;background:#e1e1e1"></div>
<div style="position:absolute;left:57px;top:0;width:1px;height:23px;background:#c0c0c0"></div>
<div style="position:absolute;left:183px;top:23px;width:1px;height:190px;background:#e1e1e1"></div>
<div style="position:absolute;left:183px;top:0;width:1px;height:23px;background:#c0c0c0"></div>
<div style="position:absolute;left:321px;top:23px;width:1px;height:190px;background:#e1e1e1"></div>
<div style="position:absolute;left:321px;top:0;width:1px;height:23px;background:#c0c0c0"></div>
<div style="position:absolute;left:394px;top:23px;width:1px;height:190px;background:#e1e1e1"></div>
<div style="position:absolute;left:394px;top:0;width:1px;height:23px;background:#c0c0c0"></div>
<div style="position:absolute;left:605px;top:23px;width:1px;height:190px;background:#e1e1e1"></div>
<div style="position:absolute;left:605px;top:0;width:1px;height:23px;background:#c0c0c0"></div>
<div style="position:absolute;left:753px;top:23px;width:1px;height:190px;background:#e1e1e1"></div>
<div style="position:absolute;left:753px;top:0;width:1px;height:23px;background:#c0c0c0"></div>
<div style="position:absolute;left:911px;top:23px;width:1px;height:190px;background:#e1e1e1"></div>
<div style="position:absolute;left:911px;top:0;width:1px;height:23px;background:#c0c0c0"></div>
<div style="position:absolute;left:1164px;top:23px;width:1px;height:190px;background:#e1e1e1"></div>
<div style="position:absolute;left:1164px;top:0;width:1px;height:23px;background:#c0c0c0"></div>
<div style="position:absolute;left:1397px;top:23px;width:1px;height:190px;background:#e1e1e1"></div>
<div style="position:absolute;left:1397px;top:0;width:1px;height:23px;background:#c0c0c0"></div>
<div style="position:absolute;left:1608px;top:23px;width:1px;height:190px;background:#e1e1e1"></div>
<div style="position:absolute;left:1608px;top:0;width:1px;height:23px;background:#c0c0c0"></div>
<div style="position:absolute;left:1819px;top:23px;width:1px;height:190px;background:#e1e1e1"></div>
<div style="position:absolute;left:1819px;top:0;width:1px;height:23px;background:#c0c0c0"></div>
<div class="hl" style="left:16px;width:41px;color:#107c41">A</div>
<div class="hl" style="left:57px;width:126px;color:#242424">B</div>
<div class="hl" style="left:183px;width:138px;color:#242424">C</div>
<div class="hl" style="left:321px;width:73px;color:#242424">D</div>
<div class="hl" style="left:394px;width:211px;color:#242424">E</div>
<div class="hl" style="left:605px;width:148px;color:#242424">F</div>
<div class="hl" style="left:753px;width:158px;color:#242424">G</div>
<div class="hl" style="left:911px;width:253px;color:#242424">H</div>
<div class="hl" style="left:1164px;width:233px;color:#242424">I</div>
<div class="hl" style="left:1397px;width:211px;color:#242424">J</div>
<div class="hl" style="left:1608px;width:211px;color:#242424">K</div>
<div class="rn" style="top:24.5px;color:#107c41">1</div>
<div class="rn" style="top:48.5px;color:#242424">2</div>
<div class="rn" style="top:72.5px;color:#242424">3</div>
<div class="rn" style="top:96.5px;color:#242424">4</div>
<div class="rn" style="top:120.5px;color:#242424">5</div>
<div class="rn" style="top:144.5px;color:#242424">6</div>
<div class="rn" style="top:168.5px;color:#242424">7</div>
<div class="rn" style="top:192.5px;color:#242424">8</div>
<div class="c" style="top:25.5px;left:20px">No.</div>
<div class="c" style="top:25.5px;left:61px">Kod diskaun</div>
<div class="c" style="top:25.5px;left:187px">Nama diskaun</div>
<div class="c" style="top:25.5px;left:325px">Status</div>
<div class="c" style="top:25.5px;left:398px">Jenis diskaun</div>
<div class="c" style="top:25.5px;left:609px">Nilai diskaun</div>
<div class="c" style="top:25.5px;left:757px">Had penggunaan</div>
<div class="c" style="top:25.5px;left:915px">Kuantiti yang digunakan</div>
<div class="c" style="top:25.5px;left:1168px">Kuantiti yang tinggal</div>
<div class="c" style="top:25.5px;left:1401px">Tarikh mula</div>
<div class="c" style="top:25.5px;left:1612px">Tarikh akhir</div>
<div class="c" style="top:25.5px;left:1823px">Maklumat</div>
<div class="c" style="top:49.5px;left:16px;width:38px;text-align:right">1</div>
<div class="c" style="top:49.5px;left:61px">DEMOCODE</div>
<div class="c" style="top:49.5px;left:187px">demodiscount</div>
<div class="c" style="top:49.5px;left:325px">Aktif</div>
<div class="c" style="top:49.5px;left:398px">Peratus diskaun</div>
<div class="c" style="top:49.5px;left:609px">15%</div>
<div class="c" style="top:49.5px;left:757px">Tanpa had</div>
<div class="c" style="top:49.5px;left:911px;width:250px;text-align:right">0</div>
<div class="c" style="top:49.5px;left:1200px">--</div>
<div class="c d" style="top:49.5px;left:1401px">2024-10-22 08:00:00</div>
<div class="c d" style="top:49.5px;left:1612px">2024-11-30 08:00:00</div>
<div class="c d" style="top:49.5px;left:1823px">2024-10-22</div>
<div class="c" style="top:73.5px;left:16px;width:38px;text-align:right">2</div>
<div class="c" style="top:73.5px;left:61px">SALE123</div>
<div class="c" style="top:73.5px;left:187px">sale</div>
<div class="c" style="top:73.5px;left:325px">Aktif</div>
<div class="c" style="top:73.5px;left:398px">Diskaun nilai tetap</div>
<div class="c" style="top:73.5px;left:609px">RM 50.00</div>
<div class="c" style="top:73.5px;left:757px">Tanpa had</div>
<div class="c" style="top:73.5px;left:911px;width:250px;text-align:right">0</div>
<div class="c" style="top:73.5px;left:1200px">--</div>
<div class="c d" style="top:73.5px;left:1401px">2024-10-22 08:00:00</div>
<div class="c d" style="top:73.5px;left:1612px">2024-11-27 08:00:00</div>
<div class="c d" style="top:73.5px;left:1823px">2024-10-22</div>
<svg style="left:606px;top:48px" width="7" height="7" viewBox="0 0 7 7"><path d="M0 0H7L0 7Z" fill="#0b7a0b"/></svg>
<svg style="left:606px;top:72px" width="7" height="7" viewBox="0 0 7 7"><path d="M0 0H7L0 7Z" fill="#0b7a0b"/></svg>
<div style="position:absolute;left:15px;top:22px;width:44px;height:27px;border:2px solid #107c41"></div>
<div style="position:absolute;left:54px;top:44px;width:7px;height:7px;background:#107c41;border:1px solid #fff"></div>
</div>
<div style="position:absolute;left:1878px;top:260px;width:10px;height:212px;background:#fafafa;border-radius:5px 0 0 0;border-left:1px solid #e8e8e8"></div>
</body></html>
